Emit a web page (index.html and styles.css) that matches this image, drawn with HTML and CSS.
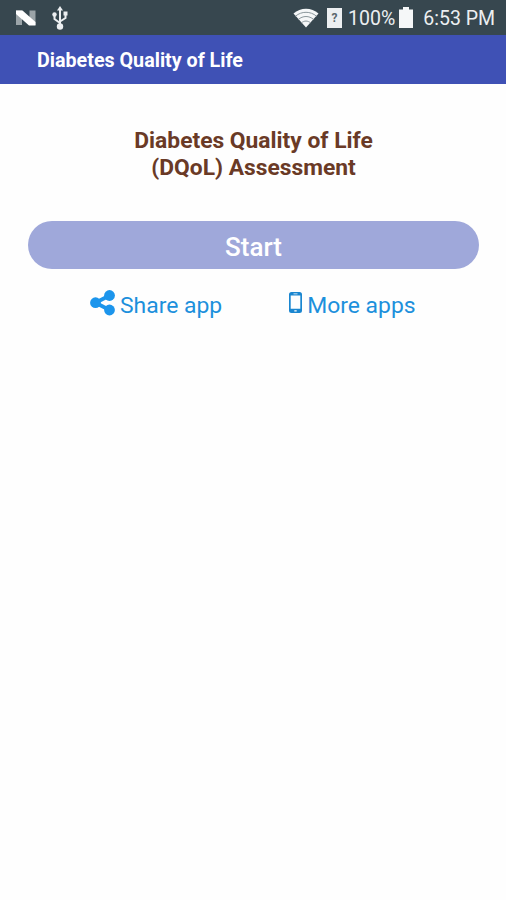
FILE: index.html
```html
<!DOCTYPE html>
<html lang="en">
<head>
    <meta charset="UTF-8">
    <title>Diabetes Quality of Life</title>
    <link rel="stylesheet" href="styles.css">
</head>
<body>
    <div class="status-bar">
        <svg class="icon-n" width="22" height="18" viewBox="0 0 22 18">
            <path d="M1 1.500h6v14.500H1zM14.500 1.500h6v14.500h-6z" fill="#9ba4a8"/>
            <path d="M1 1.500h6.500L20.500 13v3.500h-6.500L1 5z" fill="#fff"/>
        </svg>
        <svg class="icon-usb" width="18" height="24" viewBox="0 0 18 24">
            <path d="M9 20V3M9 17l-5.500-4V9M9 15.500l5.500-3.500V7" fill="none" stroke="#eceff1" stroke-width="2"/>
            <path d="M9 0l3 4.500H6z" fill="#eceff1"/>
            <circle cx="9" cy="20.500" r="3.200" fill="#eceff1"/>
            <circle cx="3.500" cy="8.500" r="2.200" fill="#eceff1"/>
            <path d="M12.500 5.500h4v4h-4z" fill="#eceff1"/>
        </svg>
        <svg class="icon-wifi" width="26" height="20" viewBox="0 0 26 20">
            <path d="M13 19.500L0.500 5.500C7.500-.8 18.500-.8 25.500 5.500z" fill="#f5f7f8"/>
            <path d="M2.500 8.200c6-5.200 15-5.200 21 0M5.300 11.500c4.500-4 10.900-4 15.400 0M8.500 14.800c2.700-2.300 6.300-2.300 9 0" fill="none" stroke="#8b979c" stroke-width="1"/>
        </svg>
        <div class="sim">?</div>
        <span class="percent">100%</span>
        <svg class="icon-battery" width="14" height="21" viewBox="0 0 14 21">
            <path d="M4 0h6v2.500h4V21H0V2.500h4z" fill="#f5f7f8"/>
        </svg>
        <span class="time">6:53 PM</span>
    </div>
    <div class="app-bar">Diabetes Quality of Life</div>
    <div class="content">
        <h1 class="app-title">Diabetes Quality of Life<br>(DQoL) Assessment</h1>
        <button class="start-button">Start</button>
        <div class="links">
            <a class="link">
                <svg class="icon-share" width="25" height="26" viewBox="0 0 25 26">
                    <path d="M19.500 5.500L5.500 12.700l14 7.300" fill="none" stroke="#1c95ec" stroke-width="3.800"/>
                    <circle cx="19.500" cy="5.500" r="5.400" fill="#1c95ec"/>
                    <circle cx="5.500" cy="12.700" r="5.400" fill="#1c95ec"/>
                    <circle cx="19.500" cy="20" r="5.400" fill="#1c95ec"/>
                </svg>
                <span class="share-text">Share app</span>
            </a>
            <a class="link">
                <svg class="icon-phone" width="13" height="22" viewBox="0 0 13 22">
                    <path d="M2.500 0h8Q13 0 13 2.500v16Q13 21 10.500 21h-8Q0 21 0 18.500v-16Q0 0 2.500 0zM1.700 3.500v13.300h9.600V3.500zM4.500 1.500v.8h4v-.8zM5.300 18.200v1.300h2.400v-1.300z" fill="#1a86d0" fill-rule="evenodd"/>
                </svg>
                <span class="more-text">More apps</span>
            </a>
        </div>
    </div>
</body>
</html>
```
FILE: styles.css
```css
body {
    font-family: Roboto, sans-serif;
    margin: 0;
    background-color: #fefefe;
    height: 900px;
    overflow: hidden;
}
.status-bar {
    display: flex;
    align-items: center;
    box-sizing: border-box;
    height: 35px;
    padding: 0 11px 0 15px;
    background-color: #37474f;
    color: #eceff1;
    font-size: 19.5px;
}
.icon-usb {
    margin-left: 14px;
}
.icon-wifi {
    margin-left: auto;
}
.sim {
    width: 15px;
    height: 20px;
    margin-left: 8px;
    background-color: #eceff1;
    color: #5b686e;
    font-size: 12px;
    font-weight: bold;
    line-height: 20px;
    text-align: center;
}
.percent {
    margin-left: 6px;
    padding-top: 2px;
}
.icon-battery {
    margin-left: 4px;
}
.time {
    margin-left: 10px;
    padding-top: 2px;
}
.app-bar {
    height: 49px;
    padding-left: 37px;
    background-color: #3f51b5;
    color: #fff;
    font-size: 19.7px;
    font-weight: bold;
    line-height: 51px;
}
.content {
    padding: 43px 27px 0 28px;
}
.app-title {
    margin: 0;
    color: #6a3a26;
    font-size: 22.8px;
    font-weight: bold;
    line-height: 27px;
    text-align: center;
}
.start-button {
    display: block;
    width: 100%;
    height: 48px;
    margin-top: 40px;
    padding: 3px 0 0;
    border: none;
    border-radius: 24px;
    background-color: #9fa8da;
    color: #fff;
    font-family: inherit;
    font-size: 26px;
    font-weight: 500;
}
.links {
    display: flex;
    margin: 20px 0 0 62px;
    color: #1c90dc;
    font-size: 22.9px;
}
.link {
    display: flex;
    align-items: center;
    height: 28px;
}
.link + .link {
    margin-left: 67px;
}
.share-text,
.more-text {
    margin-left: 5px;
    padding-top: 4px;
}
```
